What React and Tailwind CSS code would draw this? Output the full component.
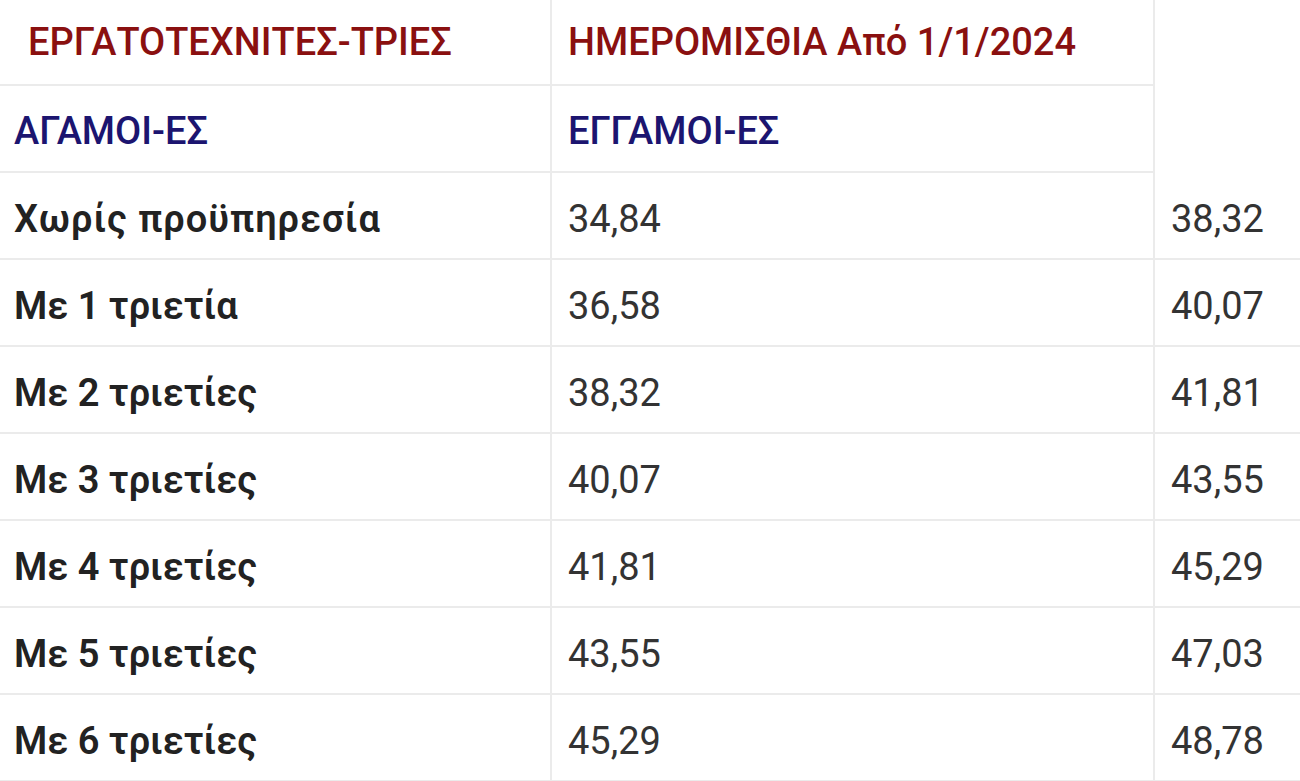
import React from "react";

const rows = [
  ["Χωρίς προϋπηρεσία", "34,84", "38,32"],
  ["Με 1 τριετία", "36,58", "40,07"],
  ["Με 2 τριετίες", "38,32", "41,81"],
  ["Με 3 τριετίες", "40,07", "43,55"],
  ["Με 4 τριετίες", "41,81", "45,29"],
  ["Με 5 τριετίες", "43,55", "47,03"],
  ["Με 6 τριετίες", "45,29", "48,78"],
];

export default function App() {
  return (
    <div
      className="w-[1300px] h-[781px] overflow-hidden bg-white"
      style={{ fontFamily: "Roboto, 'Noto Sans', sans-serif" }}
    >
      <div className="grid grid-cols-[552px_603px_1fr] text-[38px] leading-none">
        <div className="h-[86px] flex items-center pl-[28px] border-b-2 border-r-2 border-[#ebebeb] text-[#8a1010] font-medium">
          ΕΡΓΑΤΟΤΕΧΝΙΤΕΣ-ΤΡΙΕΣ
        </div>
        <div className="h-[86px] flex items-center pl-[16px] border-b-2 border-r-2 border-[#ebebeb] text-[#8a1010] font-medium">
          ΗΜΕΡΟΜΙΣΘΙΑ Από 1/1/2024
        </div>
        <div className="h-[86px]" />
        <div className="h-[87px] flex items-center pl-[14px] pt-[4px] border-b-2 border-r-2 border-[#ebebeb] text-[#1c1570] font-medium">
          ΑΓΑΜΟΙ-ΕΣ
        </div>
        <div className="h-[87px] flex items-center pl-[16px] pt-[4px] border-b-2 border-r-2 border-[#ebebeb] text-[#1c1570] font-medium">
          ΕΓΓΑΜΟΙ-ΕΣ
        </div>
        <div className="h-[87px]" />
        {rows.map((r, i) => (
          <React.Fragment key={r[0]}>
            <div
              className={
                i === 0
                  ? "h-[87px] flex items-center pl-[14px] pt-[6px] border-b-2 border-r-2 border-[#ebebeb] text-[#222222] font-semibold tracking-[1px]"
                  : "h-[87px] flex items-center pl-[14px] pt-[6px] border-b-2 border-r-2 border-[#ebebeb] text-[#222222] font-semibold"
              }
            >
              {r[0]}
            </div>
            <div className="h-[87px] flex items-center pl-[16px] pt-[6px] border-b-2 border-r-2 border-[#ebebeb] text-[#333333]">
              {r[1]}
            </div>
            <div className="h-[87px] flex items-center pl-[16px] pt-[6px] border-b-2 border-[#ebebeb] text-[#333333]">
              {r[2]}
            </div>
          </React.Fragment>
        ))}
      </div>
    </div>
  );
}
